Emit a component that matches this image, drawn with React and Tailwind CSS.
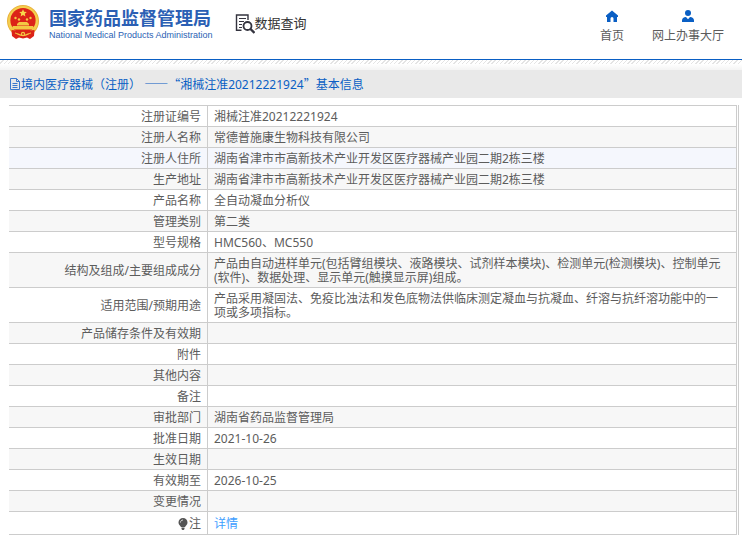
import React from 'react';

const rows = [
    { label: '注册证编号', value: '湘械注准20212221924' },
    { label: '注册人名称', value: '常德普施康生物科技有限公司' },
    { label: '注册人住所', value: '湖南省津市市高新技术产业开发区医疗器械产业园二期2栋三楼', active: true },
    { label: '生产地址', value: '湖南省津市市高新技术产业开发区医疗器械产业园二期2栋三楼' },
    { label: '产品名称', value: '全自动凝血分析仪' },
    { label: '管理类别', value: '第二类' },
    { label: '型号规格', value: 'HMC560、MC550' },
    {
        label: '结构及组成/主要组成成分',
        value: '产品由自动进样单元(包括臂组模块、液路模块、试剂样本模块)、检测单元(检测模块)、控制单元(软件)、数据处理、显示单元(触摸显示屏)组成。',
    },
    {
        label: '适用范围/预期用途',
        value: '产品采用凝固法、免疫比浊法和发色底物法供临床测定凝血与抗凝血、纤溶与抗纤溶功能中的一项或多项指标。',
    },
    { label: '产品储存条件及有效期', value: '' },
    { label: '附件', value: '' },
    { label: '其他内容', value: '' },
    { label: '备注', value: '' },
    { label: '审批部门', value: '湖南省药品监督管理局' },
    { label: '批准日期', value: '2021-10-26' },
    { label: '生效日期', value: '' },
    { label: '有效期至', value: '2026-10-25' },
    { label: '变更情况', value: '' },
];

const Emblem = () => (
    <svg className="w-8 h-[34px]" viewBox="0 0 32 34" aria-hidden="true">
        <circle cx="16" cy="16" r="16" fill="#e9b23c" />
        <circle cx="16" cy="16" r="15" fill="#f5cf4f" />
        <circle cx="16" cy="15.5" r="12.6" fill="#dc2318" />
        <path d="M16 4.3l1.1 2.5 2.7.2-2 1.8.6 2.7-2.4-1.5-2.4 1.5.6-2.7-2-1.8 2.7-.2z" fill="#f7d94c" />
        <g fill="#f3c843">
            <circle cx="8.5" cy="13" r="1.2" />
            <circle cx="12" cy="14.5" r="1.2" />
            <circle cx="20" cy="14.5" r="1.2" />
            <circle cx="23.5" cy="13" r="1.2" />
            <path d="M12 17h8l2 2v2h4l2 3.500H4L6 21h4v-2z" />
        </g>
        <path d="M10 20.500h12" stroke="#dc2318" strokeWidth=".5" />
        <path d="M4.500 25l5 .5 6.500 2 6.500-2 5-.5L27 31l-4 3-3-1.500-4 1-4-1L9 34l-4-3z" fill="#dc2318" />
        <path d="M8 28c3 .5 4 2.500 8 2.500s5-2 8-2.500" fill="none" stroke="#f3c843" strokeWidth="1.200" />
        <circle cx="16" cy="29" r="2.200" fill="#f3c843" />
        <circle cx="16" cy="29" r=".9" fill="#dc2318" />
    </svg>
);

const SearchDoc = () => (
    <svg className="w-5 h-5" viewBox="0 0 20 20" fill="none" stroke="#34343f" aria-hidden="true">
        <path d="M6.500 16.200H1.500V1h11.500v5" strokeWidth="1.400" />
        <path d="M4 4.500h7M4 7.500h5M4 10.500h3M4 13.500h3" strokeWidth="1.200" />
        <circle cx="12.500" cy="12" r="4" strokeWidth="1.800" />
        <path d="M15.500 15l4 4" strokeWidth="2.400" />
    </svg>
);

const HomeIcon = () => (
    <svg className="w-3 h-3" viewBox="0 0 12 12" fill="#0a5fc4" aria-hidden="true">
        <path d="M6 .5L0 5.500V7h1v5h3.500V8.500a1.500 1.500 0 0 1 3 0V12H11V7h1V5.500z" />
    </svg>
);

const PersonIcon = () => (
    <svg className="w-3 h-3" viewBox="0 0 12 12" fill="#0a5fc4" aria-hidden="true">
        <circle cx="6" cy="3" r="3" />
        <path d="M0 12V10.500C0 8.300 1.600 7 4 7l2 2.200L8 7c2.400 0 4 1.300 4 3.500V12z" />
    </svg>
);

const DocIcon = () => (
    <svg className="w-3 h-3" viewBox="0 0 12 12" fill="none" stroke="#3b78cc" aria-hidden="true">
        <path d="M1.500.5h6l3 3v8h-9zM7.500.5v3h3M3.500 5.500h5M3.500 7.500h5M3.500 9.500h5" />
    </svg>
);

const BulbIcon = () => (
    <svg className="w-3 h-3" viewBox="0 0 12 12" aria-hidden="true">
        <path d="M6 0a4.500 4.500 0 0 0-4.500 4.500C1.500 6.700 3.200 7.500 4 9h4c.8-1.500 2.500-2.300 2.500-4.500A4.500 4.500 0 0 0 6 0z" fill="#555" />
        <path d="M4.500 9.500h3V11l-.8 1H5.300l-.8-1z" fill="#555" />
        <path d="M3.500 4.500C3.500 3 4.500 2 6 2" stroke="#ddd" fill="none" />
    </svg>
);

const labelCell = 'w-[199px] border-r border-b border-[#ccc] pt-0.5 pr-1.5 text-right font-normal';
const valueCell = 'border-r border-b border-[#ccc] pt-1 pr-3 pb-0.5 pl-1.5';

const App = () => {
    return (
        <div
            lang="zh-CN"
            className="min-h-screen bg-white font-['Noto_Sans','Noto_Sans_CJK_SC',sans-serif] text-xs text-[#5c5c5c]"
        >
            <header className="flex h-[60px] items-start justify-between border-b border-[#0a5fc4] pl-[7px] pr-[18px]">
                <div className="flex">
                    <div className="flex pt-[5px]">
                        <Emblem />
                        <div className="ml-2.5 pt-[3px] text-[#2b5fb4]">
                            <h1 className="text-lg leading-5 font-bold">国家药品监督管理局</h1>
                            <p className="font-['Liberation_Sans',sans-serif] text-[9px] leading-3.5">National Medical Products Administration</p>
                        </div>
                    </div>
                    <div className="ml-[22px] flex pt-3.5">
                        <SearchDoc />
                        <h2 className="text-[13px] leading-4.5 text-[#333]">数据查询</h2>
                    </div>
                </div>
                <nav className="flex gap-7 pt-2.5">
                    <a href="#home" className="flex flex-col items-center gap-1.5">
                        <HomeIcon />
                        <span>首页</span>
                    </a>
                    <a href="#hall" className="flex flex-col items-center gap-1.5">
                        <PersonIcon />
                        <span>网上办事大厅</span>
                    </a>
                </nav>
            </header>

            <div className="h-1 bg-[repeating-linear-gradient(135deg,#fff_0_2px,#e4e4e4_2px_3px)]" />
            <div className="h-1.5 bg-linear-to-b from-white to-[#f4f4f4]" />

            <main>
                <div className="flex h-7 items-center bg-[#e9e9e9] pl-[9px] text-[#0a5fc4]">
                    <DocIcon />
                    <h3>
                        境内医疗器械（注册） <span className="font-['Noto_Sans_CJK_SC',sans-serif]">——“</span>湘械注准20212221924
                        <span className="font-['Noto_Sans_CJK_SC',sans-serif]">”</span>基本信息
                    </h3>
                </div>

                <div className="mt-[7px] mr-[3px] ml-[9px] border-r border-[#ccc] pr-px">
                    <table className="w-full table-fixed border-separate border-spacing-0 border-t border-[#ccc] leading-3.5">
                        <tbody>
                            {rows.map((row) => (
                                <tr key={row.label} className={row.active ? 'h-[21px] bg-[#f5f7fd]' : 'h-[21px] odd:bg-white even:bg-[#f7f7f7]'}>
                                    <th scope="row" className={labelCell}>
                                        {row.label}
                                    </th>
                                    <td className={valueCell}>{row.value}</td>
                                </tr>
                            ))}
                            <tr className="h-[23px]">
                                <th scope="row" className={labelCell}>
                                    <span className="flex items-center justify-end">
                                        <BulbIcon />注
                                    </span>
                                </th>
                                <td className={valueCell}>
                                    <a href="#detail" className="text-[#409eff]">
                                        详情
                                    </a>
                                </td>
                            </tr>
                        </tbody>
                    </table>
                </div>
            </main>
        </div>
    );
};

export default App;
